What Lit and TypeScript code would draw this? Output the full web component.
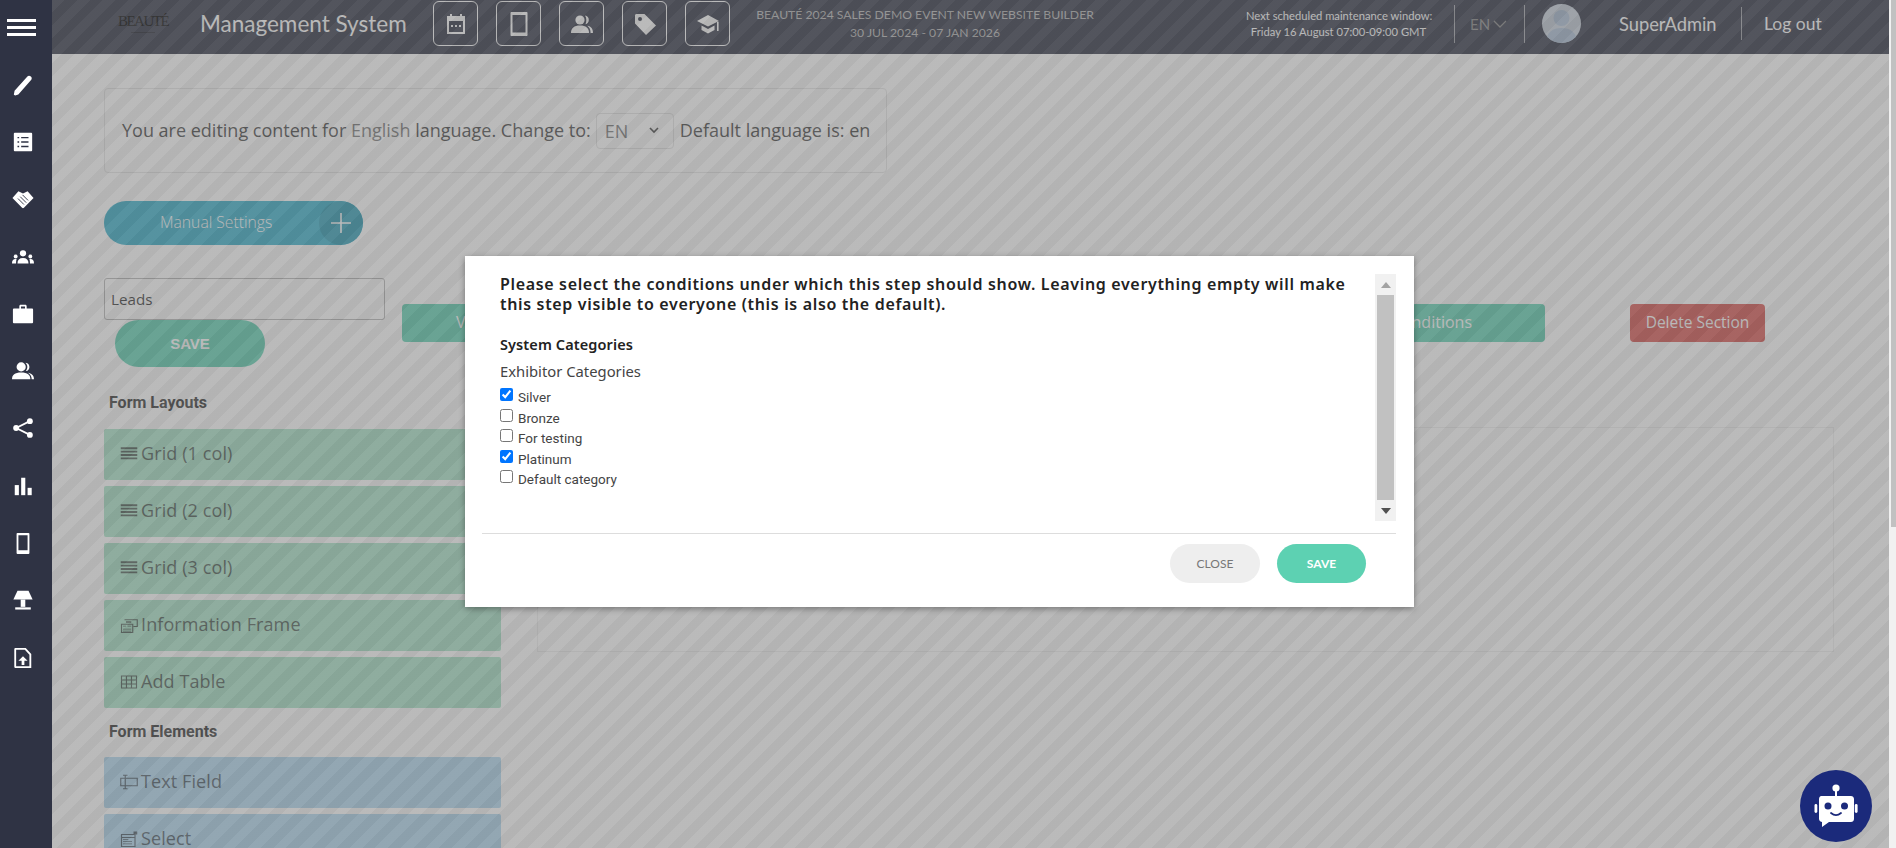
import { LitElement, html, css, svg } from "lit";
import { customElement } from "lit/decorators.js";

const I = (size: number, body: unknown, vb = "0 0 24 24") =>
  html`<svg width=${size} height=${size} viewBox=${vb} fill="currentColor">${body}</svg>`;

const sideIcons = [
  svg`<path d="M3.5 23.5l-1.5-1 .8-4.2L16.8 2.6c1-1 2.6-1 3.8.1s1.2 2.7.2 3.8L6.9 22.4z"/>`,
  svg`<path fill-rule="evenodd" d="M3 2h18a1 1 0 011 1v18a1 1 0 01-1 1H3a1 1 0 01-1-1V3a1 1 0 011-1zm3 4.500v1.500h1.800V6.500zm4 0v1.500h8V6.500zm-4 4.800v1.500h1.800v-1.500zm4 0v1.500h8v-1.500zm-4 4.800v1.500h1.800v-1.500zm4 0v1.500h8v-1.500z"/>`,
  svg`<path d="M7 3.500l5 2.500 5-2.500 6.500 7.500-10.500 10.500q-1 1-2 0L.5 11z"/><path d="M6.500 11.500l6.500 6.500M9 9.500l6.500 6.500M11.500 7.500l6 6" stroke="#2f3344" stroke-width="1" fill="none"/>`,
  svg`<circle cx="12" cy="8" r="3.400"/><path d="M6 19c0-4 2-6 6-6s6 2 6 6z"/><circle cx="4" cy="11.500" r="2.100"/><path d="M0 19c0-3 1-4.800 4-4.800.6 0 1 .1 1 .1-.5 1.500-.6 3-.6 4.700z"/><circle cx="20" cy="11.500" r="2.100"/><path d="M24 19c0-3-1-4.800-4-4.800-.6 0-1 .1-1 .1.500 1.500.6 3 .6 4.700z"/>`,
  svg`<path fill-rule="evenodd" d="M8 6V3.500C8 2.700 8.700 2 9.500 2h5c.8 0 1.500.7 1.500 1.500V6h6c.6 0 1 .4 1 1v14c0 .6-.4 1-1 1H2c-.6 0-1-.4-1-1V7c0-.6.4-1 1-1zm1.800 0h4.400V3.800H9.800z"/>`,
  svg`<circle cx="10" cy="7.500" r="5"/><path d="M0 21c0-5 3-7.500 10-7.500S20 16 20 21z"/><path d="M15 3c2.500.3 4 2.200 4 4.500S17.500 11.700 15.500 12c-.5 0-.2-.5.300-1.200 1.300-2 1.300-4.300 0-6.500-.5-.7-1.300-1.200-.8-1.300zM17.500 14c3.500.7 6.500 2.500 6.500 7h-2.500c0-3-1.500-5.200-4-7z"/>`,
  svg`<circle cx="19.500" cy="4.500" r="3.200"/><circle cx="4.500" cy="12" r="3.200"/><circle cx="19.500" cy="19.500" r="3.200"/><path d="M4.500 12l15-7.500M4.500 12l15 7.500" stroke="currentColor" stroke-width="2" fill="none"/>`,
  svg`<rect x="3" y="11" width="4.500" height="11"/><rect x="10" y="3" width="4.500" height="19"/><rect x="17" y="14" width="4.500" height="8"/>`,
  svg`<path fill-rule="evenodd" d="M6 1h12c.6 0 1 .4 1 1v21c0 .6-.4 1-1 1H6c-.6 0-1-.4-1-1V2c0-.6.4-1 1-1zm1 2.500v16.500h10V3.500z"/>`,
  svg`<path d="M6 2h12l4.500 9.500H1.500z"/><rect x="9.500" y="11.500" width="5" height="8"/><rect x="3.500" y="20" width="17" height="2.400"/>`,
  svg`<path fill-rule="evenodd" d="M4 1h11l6 6.500V23H4c-.8 0-1.500-.6-1.500-1.400V2.400C2.500 1.600 3.200 1 4 1zm.500 2v18h14.500V8.500L14 3zM12 10l5 5h-3.500v4.500h-3V15H7z"/>`,
];

const headIcons = [
  svg`<path fill-rule="evenodd" d="M6 2h2v2h8V2h2v2h3v18H3V4h3zM5 9v11h14V9zm2 4h2v2H7zm4 0h2v2h-2zm4 0h2v2h-2z"/>`,
  svg`<path fill-rule="evenodd" d="M4.500 0h15c.6 0 1 .4 1 1v22c0 .6-.4 1-1 1h-15c-.6 0-1-.4-1-1V1c0-.6.4-1 1-1zm1 3v17.500h13V3z"/>`,
  svg`<circle cx="10" cy="8" r="4.600"/><path d="M1 21c0-5 3-7.500 9-7.500s9 2.500 9 7.500z"/><path d="M15 3.600c2.500.3 3.800 2.200 3.800 4.400s-1.300 4-3.300 4.300c1.200-2.700 1.200-6-.5-8.700zM17.500 13.800c3.500.6 5.500 3 5.500 7.200h-2.400c0-3-1-5.500-3.100-7.200z"/>`,
  svg`<path fill-rule="evenodd" d="M3 2h8.500L23 13.500 13 23 2 11.500V3zm4 3a2 2 0 100 4 2 2 0 000-4z"/>`,
  svg`<path d="M12 3L1 9l11 5.500L23 9z"/><path d="M5.500 13.500V18l6.500 3.500 6.500-3.500v-4.500L12 17z"/><rect x="21" y="10" width="1.600" height="9"/>`,
];

const S = (b: unknown) => I(18, b);
const gridIco = svg`<path d="M1 3h22v2.500H1zM1 7.500h22V10H1zM1 12h22v2.500H1zM1 16.500h22V19H1z"/>`;
const infoIco = svg`<path fill="none" stroke="currentColor" stroke-width="1.500" d="M2 11h15v11H2zM6 5h17v9h-5"/><path d="M4 13h4v1H4zM10 13h5v1h-5zM4 17h11v1H4zM4 19.500h11v1H4zM8 7h7v2H8z"/>`;
const tableIco = svg`<path fill="none" stroke="currentColor" stroke-width="1.500" d="M2 4h20v16H2zM2 9.300h20M2 14.700h20M8.600 4v16M15.300 4v16"/>`;
const textIco = svg`<path fill="none" stroke="currentColor" stroke-width="1.500" d="M7 7h16v10H7M7 3v18M4 3h6M4 21h6M7 7H1v10h6"/>`;
const selIco = svg`<path fill="none" stroke="currentColor" stroke-width="1.500" d="M2 6h18v16H2zM2 10h18"/><path d="M18 2h5v4h-5zM4 12h7v1H4zM4 15h12v1H4zM4 18h12v1H4z"/>`;

@customElement("app-root")
export class AppRoot extends LitElement {
  static styles = css`
    :host { display: block; height: 848px; overflow: hidden; position: relative; font-family: "Open Sans", sans-serif; background: #fff; }
    .shell { display: flex; height: 848px; }
    .side { width: 52px; flex: none; background: #2f3344; color: #fff; display: flex; flex-direction: column; align-items: center; }
    .burger { width: 29px; height: 17px; margin: 19px 0 20px 7px; display: flex; flex-direction: column; justify-content: space-between; align-self: flex-start; }
    .burger i { display: block; height: 3px; background: #fff; }
    .side-item { height: 57.3px; width: 100%; box-sizing: border-box; padding-right: 6px; flex: none; display: flex; align-items: center; justify-content: center; }
    .main { position: relative; flex: 1; min-width: 0; overflow: hidden; }
    .scroll { width: 7px; flex: none; background: #f1f1f1; padding-left: 2px; box-sizing: border-box; }
    .scroll i { display: block; height: 527px; background: #c1c1c1; }
    header { height: 54px; box-sizing: border-box; padding-bottom: 7px; background: #2f3344; display: flex; align-items: center; color: #fff; font-family: Lato, sans-serif; }
    .logo { width: 46px; margin-left: 68px; display: flex; flex-direction: column; align-items: center; gap: 3px; font: 15px/15px "Liberation Serif", serif; color: #000; letter-spacing: -1.5px; white-space: nowrap; }
    .logo i { display: block; width: 24px; height: 1px; background: #1d1f2a; }
    .title { margin-left: 34px; font-size: 22.5px; white-space: nowrap; width: 233px; }
    .hicons { display: flex; gap: 18px; }
    .hbtn { width: 45px; height: 45px; box-sizing: border-box; border: 1px solid #fff; border-radius: 6px; display: flex; align-items: center; justify-content: center; }
    .event { margin-left: 26px; width: 338px; text-align: center; font-size: 12.2px; line-height: 18px; color: #b6b6b6; white-space: nowrap; }
    .maint { margin-left: 152px; width: 185px; text-align: center; font-size: 11.2px; line-height: 16px; white-space: nowrap; }
    .sep { width: 1px; background: #fff; opacity: .55; flex: none; }
    .s1 { height: 38px; margin-left: 23px; }
    .s2 { margin-left: 0; }
    .lang { width: 69px; box-sizing: border-box; padding-left: 15px; display: flex; align-items: center; gap: 3px; font-size: 15px; color: #8d8d8d; }
    .avatar { width: 39px; height: 39px; border-radius: 50%; margin-left: 17px; background: #c7d0dc; overflow: hidden; flex: none; }
    .user { margin-left: 38px; font-size: 18.3px; width: 122px; white-space: nowrap; }
    .s3 { height: 33px; }
    .logout { margin-left: 22px; font-size: 17.5px; white-space: nowrap; }
    .content { padding: 34px 0 0 52px; width: 1785px; box-sizing: border-box; }
    .info { width: 783px; height: 85px; box-sizing: border-box; border: 1px solid #e6e6e6; border-radius: 4px; display: flex; align-items: center; padding: 0 0 2px 17px; font-size: 18px; color: #444; white-space: pre; }
    .info .en { color: #777; }
    .lsel { width: 78px; height: 36px; margin: 2px 6px 0 5px; box-sizing: border-box; border: 1px solid #e3e3e3; border-radius: 4px; display: flex; align-items: center; justify-content: space-between; padding: 0 14px 0 8px; color: #777; }
    .pill { margin-top: 28px; width: 259px; height: 44px; box-sizing: border-box; padding-bottom: 2px; border-radius: 22px; background: #35b0cb; color: #fff; position: relative; display: flex; align-items: center; font-size: 15.7px; font-weight: 300; overflow: hidden; }
    .pill span { margin-left: 56px; }
    .plus { position: absolute; right: 0; top: 0; width: 44px; height: 44px; border-radius: 50%; background: #2a9bb4; display: flex; align-items: center; justify-content: center; }
    .tools { margin-top: 33px; display: flex; align-items: flex-start; }
    .lcol { width: 298px; flex: none; }
    .leads { width: 281px; height: 42px; box-sizing: border-box; border: 1px solid #b5b5b5; border-radius: 3px; font-size: 15.2px; display: flex; align-items: center; padding-left: 6px; color: #333; }
    .savep { margin-left: 11px; width: 150px; height: 47px; border-radius: 24px; background: #5dd1b2; color: #fff; font: bold 15px "Liberation Sans", sans-serif; display: flex; align-items: center; justify-content: center; }
    .gbtn { margin-top: 26px; height: 38px; padding-bottom: 2px; background: #5dd1b2; border-radius: 4px; color: #fff; font-size: 16px; display: flex; align-items: center; box-sizing: border-box; }
    .view { width: 300px; padding-left: 54px; }
    .cond { width: 400px; margin-left: 443px; justify-content: flex-end; padding-right: 73px; }
    .del { margin: 26px 0 0 85px; width: 135px; height: 38px; padding-bottom: 2px; box-sizing: border-box; border-radius: 4px; background: #d9534f; color: #fff; font-size: 15.5px; display: flex; align-items: center; justify-content: center; }
    .lower { display: flex; align-items: flex-start; }
    .palette { width: 397px; flex: none; padding-top: 23px; }
    .plabel { font: bold 16px/26px Roboto, sans-serif; color: #333; margin: 0 0 13px 5px; }
    .plabel.two { margin: 11px 0 12px 5px; }
    .pitems { display: flex; flex-direction: column; gap: 6px; }
    .pit { height: 51px; box-sizing: border-box; display: flex; align-items: center; gap: 3px; padding: 0 0 3px 16px; border-radius: 2px; font-size: 18px; color: #4a5a52; letter-spacing: .1px; }
    .pit svg { position: relative; top: 1px; }
    .pit.g { background: #a8e4c8; }
    .pit.b { background: #b0d8f0; color: #4a5a66; }
    .drop { margin: 60px 0 0 36px; width: 1297px; height: 225px; box-sizing: border-box; border: 1px solid #efefef; }
    .overlay { position: absolute; inset: 0; background: repeating-linear-gradient(135deg, rgba(118,118,118,.5) 0 9px, rgba(104,104,104,.5) 9px 18px); }
    .modal { position: absolute; left: 465px; top: 256px; width: 949px; height: 351px; background: #fff; box-shadow: 0 2px 6px rgba(0,0,0,.35); box-sizing: border-box; padding: 18px 18px 0 17px; }
    .mbody { display: flex; height: 247px; margin-bottom: 12px; }
    .mtext { flex: 1; min-width: 0; padding-left: 18px; color: #222; font-family: "Noto Sans", sans-serif; }
    .mhead { font-size: 16px; font-weight: 600; line-height: 20px; letter-spacing: .66px; margin: 0; white-space: nowrap; }
    .mcat { font-size: 14.5px; font-weight: 600; line-height: 20px; margin-top: 20px; letter-spacing: .1px; }
    .msub { font-size: 14.8px; line-height: 20px; margin-top: 7px; color: #444; }
    .checks { margin-top: 6px; font: 13.5px Roboto, sans-serif; color: #444; }
    .ck { display: flex; height: 20.5px; align-items: flex-start; }
    .ck input { width: 13px; height: 13px; margin: 1px 5px 0 0; accent-color: #0075ff; flex: none; }
    .ck span { line-height: 20px; }
    .msb { width: 21px; flex: none; background: #f1f1f1; display: flex; flex-direction: column; align-items: center; }
    .tri { height: 21px; flex: none; display: flex; align-items: center; justify-content: center; }
    .thumb { flex: 1; width: 17px; background: #c1c1c1; }
    .mfoot { border-top: 1px solid #ddd; height: 74px; box-sizing: border-box; padding: 10px 30px 0 0; display: flex; justify-content: flex-end; gap: 17px; font: 12px Lato, sans-serif; }
    .mbtn { height: 39px; border-radius: 20px; display: flex; align-items: center; justify-content: center; }
    .mclose { width: 90px; background: #eee; color: #777; }
    .msave { width: 89px; background: #5dd1b2; color: #fff; font-weight: bold; }
    .chat { position: absolute; left: 1800px; top: 770px; width: 72px; height: 72px; border-radius: 50%; background: #1b2a7b; display: flex; align-items: center; justify-content: center; }
  `;

  render() {
    const checks: [string, boolean][] = [["Silver", true], ["Bronze", false], ["For testing", false], ["Platinum", true], ["Default category", false]];
    return html`
      <div class="shell">
        <nav class="side">
          <div class="burger"><i></i><i></i><i></i></div>
          ${sideIcons.map((b) => html`<div class="side-item">${I(22, b)}</div>`)}
        </nav>
        <div class="main">
          <header>
            <div class="logo">BEAUTÉ<i></i></div>
            <div class="title">Management System</div>
            <div class="hicons">${headIcons.map((b) => html`<div class="hbtn">${I(24, b)}</div>`)}</div>
            <div class="event">BEAUTÉ 2024 SALES DEMO EVENT NEW WEBSITE BUILDER<br />30 JUL 2024 - 07 JAN 2026</div>
            <div class="maint">Next scheduled maintenance window:<br />Friday 16 August 07:00-09:00 GMT</div>
            <div class="sep s1"></div>
            <div class="lang">EN <svg width="14" height="8" viewBox="0 0 14 8" fill="none" stroke="currentColor" stroke-width="1.300"><path d="M1 1l6 6 6-6"/></svg></div>
            <div class="sep s1 s2"></div>
            <div class="avatar"><svg width="39" height="39" viewBox="0 0 39 39"><circle cx="19.500" cy="14" r="8" fill="#a9bcd4"/><path d="M4 39c0-11 7-15 15.500-15S35 28 35 39z" fill="#a9bcd4"/></svg></div>
            <div class="user">SuperAdmin</div>
            <div class="sep s3"></div>
            <div class="logout">Log out</div>
          </header>
          <div class="content">
            <div class="info">You are editing content for <span class="en">English</span> language. Change to:<div class="lsel"><span>EN</span><svg width="10" height="7" viewBox="0 0 10 7" fill="none" stroke="#444" stroke-width="1.600"><path d="M1 1l4 4 4-4"/></svg></div>Default language is: en</div>
            <div class="pill"><span>Manual Settings</span><div class="plus"><svg width="24" height="24" viewBox="0 0 24 24" stroke="#fff" stroke-width="1.600"><path d="M12 2v20M2 12h20"/></svg></div></div>
            <div class="tools">
              <div class="lcol"><div class="leads">Leads</div><div class="savep">SAVE</div></div>
              <div class="gbtn view">View</div>
              <div class="gbtn cond">Display Conditions</div>
              <div class="del">Delete Section</div>
            </div>
            <div class="lower">
              <div class="palette">
                <div class="plabel">Form Layouts</div>
                <div class="pitems">
                  <div class="pit g">${S(gridIco)}Grid (1 col)</div>
                  <div class="pit g">${S(gridIco)}Grid (2 col)</div>
                  <div class="pit g">${S(gridIco)}Grid (3 col)</div>
                  <div class="pit g">${S(infoIco)}Information Frame</div>
                  <div class="pit g">${S(tableIco)}Add Table</div>
                </div>
                <div class="plabel two">Form Elements</div>
                <div class="pitems">
                  <div class="pit b">${S(textIco)}Text Field</div>
                  <div class="pit b">${S(selIco)}Select</div>
                </div>
              </div>
              <div class="drop"></div>
            </div>
          </div>
          <div class="overlay"></div>
        </div>
        <div class="scroll"><i></i></div>
      </div>
      <div class="modal">
        <div class="mbody">
          <div class="mtext">
            <p class="mhead">Please select the conditions under which this step should show. Leaving everything empty will make<br />this step visible to everyone (this is also the default).</p>
            <div class="mcat">System Categories</div>
            <div class="msub">Exhibitor Categories</div>
            <div class="checks">
              ${checks.map(([n, c]) => html`<label class="ck"><input type="checkbox" .checked=${c} /><span>${n}</span></label>`)}
            </div>
          </div>
          <div class="msb">
            <div class="tri"><svg width="10" height="6" viewBox="0 0 10 6"><path d="M5 0l5 6H0z" fill="#a3a3a3"/></svg></div>
            <div class="thumb"></div>
            <div class="tri"><svg width="10" height="6" viewBox="0 0 10 6"><path d="M0 0h10L5 6z" fill="#505050"/></svg></div>
          </div>
        </div>
        <div class="mfoot"><div class="mbtn mclose">CLOSE</div><div class="mbtn msave">SAVE</div></div>
      </div>
      <div class="chat">
        <svg width="46" height="46" viewBox="0 0 46 46" fill="#fff">
          <circle cx="23" cy="5" r="3.600"/><rect x="22" y="7" width="2" height="7"/>
          <path d="M8 13h30c1.500 0 3 1 3 3v20c0 2-1.500 3-3 3H16l-7 5v-5c-1 0-3-1-3-3V16c0-2 1.500-3 2-3z"/>
          <rect x="1.500" y="21" width="2.800" height="9" rx="1.400"/><rect x="41.800" y="21" width="2.800" height="9" rx="1.400"/>
          <circle cx="15" cy="23" r="3.500" fill="#1b2a7b"/><circle cx="31.500" cy="23" r="3.500" fill="#1b2a7b"/>
          <path d="M18 30c3 2.500 7 2.500 10 0" fill="none" stroke="#1b2a7b" stroke-width="1.800" stroke-linecap="round"/>
        </svg>
      </div>
    `;
  }
}
